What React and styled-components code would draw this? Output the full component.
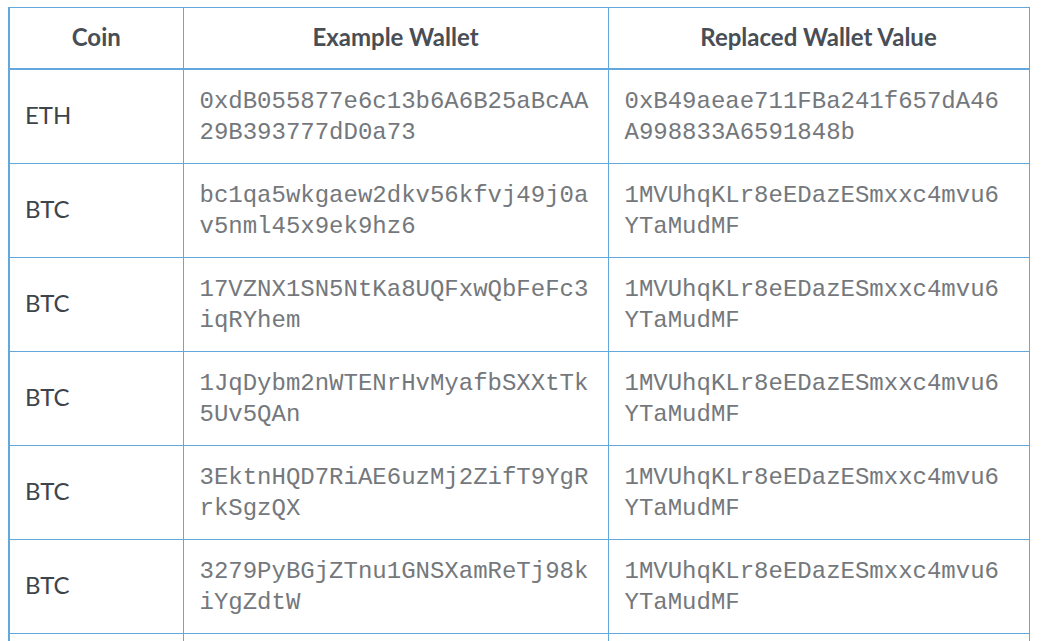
import React from 'react';
import styled, { createGlobalStyle } from 'styled-components';

const rows = [
  { coin: 'ETH', example: '0xdB055877e6c13b6A6B25aBcAA29B393777dD0a73', replaced: '0xB49aeae711FBa241f657dA46A998833A6591848b' },
  { coin: 'BTC', example: 'bc1qa5wkgaew2dkv56kfvj49j0av5nml45x9ek9hz6', replaced: '1MVUhqKLr8eEDazESmxxc4mvu6YTaMudMF' },
  { coin: 'BTC', example: '17VZNX1SN5NtKa8UQFxwQbFeFc3iqRYhem', replaced: '1MVUhqKLr8eEDazESmxxc4mvu6YTaMudMF' },
  { coin: 'BTC', example: '1JqDybm2nWTENrHvMyafbSXXtTk5Uv5QAn', replaced: '1MVUhqKLr8eEDazESmxxc4mvu6YTaMudMF' },
  { coin: 'BTC', example: '3EktnHQD7RiAE6uzMj2ZifT9YgRrkSgzQX', replaced: '1MVUhqKLr8eEDazESmxxc4mvu6YTaMudMF' },
  { coin: 'BTC', example: '3279PyBGjZTnu1GNSXamReTj98kiYgZdtW', replaced: '1MVUhqKLr8eEDazESmxxc4mvu6YTaMudMF' },
  { coin: 'BTC', example: '34BRN4wS9XnrSZfXA5MqkHzdcSBQjGkqLN', replaced: '1MVUhqKLr8eEDazESmxxc4mvu6YTaMudMF' },
];

const App = () => {
  return (
    <>
      <Global />
      <Tabla>
        <colgroup>
          <col style={{ width: 174 }} />
          <col style={{ width: 425 }} />
          <col style={{ width: 421 }} />
        </colgroup>
        <thead>
          <tr>
            <Th>Coin</Th>
            <Th>Example Wallet</Th>
            <Th>Replaced Wallet Value</Th>
          </tr>
        </thead>
        <tbody>
          {rows.map((r, i) => {
            return (
              <tr key={i}>
                <Coin>{r.coin}</Coin>
                <Addr>{r.example}</Addr>
                <Addr>{r.replaced}</Addr>
              </tr>
            );
          })}
        </tbody>
      </Tabla>
    </>
  );
};

export default App;

const Global = createGlobalStyle`
  body {
    margin: 7px 8px;
    background: #fff;
    overflow: hidden;
  }
`;

const Tabla = styled.table`
  width: 1020px;
  border-collapse: collapse;
  table-layout: fixed;
  border-left: 2px solid #62a8dc;
`;

const Th = styled.th`
  font-family: Lato, 'Open Sans', sans-serif;
  font-weight: 700;
  font-size: 24px;
  line-height: 31px;
  color: #484e55;
  text-align: center;
  padding: 13px 16px 16px;
  border: 1px solid #62a8dc;
  border-bottom: 2px solid #62a8dc;
`;

const Coin = styled.td`
  font-family: Lato, 'Open Sans', sans-serif;
  font-size: 24px;
  line-height: 31px;
  color: #3e444b;
  padding: 13px 15px 18px;
  border: 1px solid #62a8dc;
  vertical-align: middle;
`;

const Addr = styled.td`
  font-family: 'Liberation Mono', 'Courier New', monospace;
  font-size: 24px;
  line-height: 31px;
  color: #74787c;
  padding: 16px 16px 15px;
  border: 1px solid #62a8dc;
  word-break: break-all;
  vertical-align: middle;
`;
